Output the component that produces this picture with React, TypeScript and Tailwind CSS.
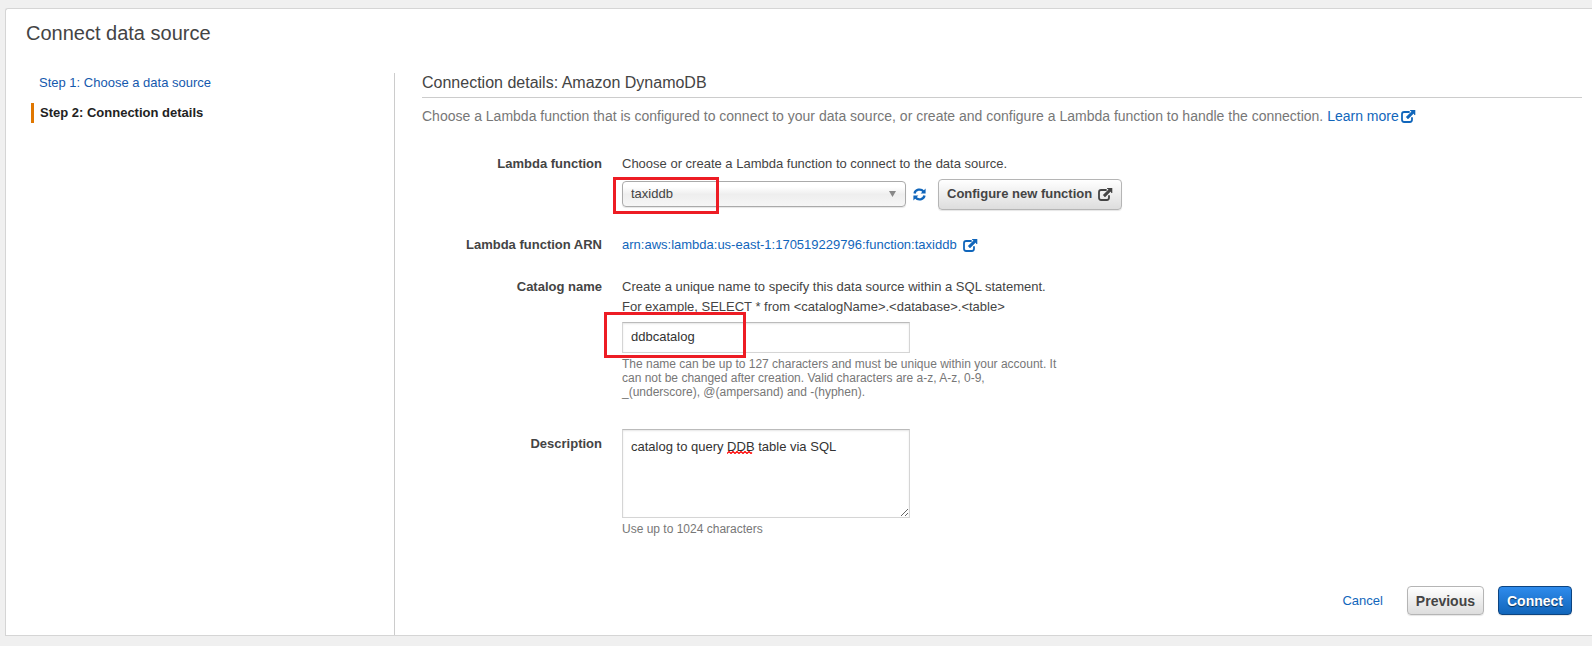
import type { ReactNode } from "react";

function ExternalIcon({ className = "" }: { className?: string }) {
  return (
    <svg viewBox="0 0 15 13" className={`inline-block h-[13px] w-[15px] ${className}`} aria-hidden="true">
      <path d="M8 2H3.200Q1 2 1 4.200V9.800Q1 12 3.200 12H8.800Q11 12 11 9.800V8" fill="none" stroke="currentColor" strokeWidth="1.800" strokeLinecap="round" />
      <path d="M9 0H14V5L12.400 3.500L7 8.900L5.200 7.100L10.600 1.700Z" fill="currentColor" stroke="currentColor" strokeWidth="0.600" strokeLinejoin="round" />
    </svg>
  );
}

function RefreshIcon() {
  return (
    <svg viewBox="0 0 13 13" className="h-[13px] w-[13px]" aria-hidden="true">
      <g fill="none" stroke="currentColor" strokeWidth="2.300">
        <path d="M1.500 5.500A5 4.600 0 0 1 10.500 3.500" />
        <path d="M11.500 7.500A5 4.600 0 0 1 2.500 9.500" />
      </g>
      <path d="M12.600 0.600V5.600H7.600ZM0.400 12.400V7.400H5.400Z" fill="currentColor" />
    </svg>
  );
}

function Row({ label, htmlFor, className, children }: { label: string; htmlFor?: string; className: string; children: ReactNode }) {
  return (
    <div className={`grid grid-cols-[180px_1fr] gap-5 ${className}`}>
      {htmlFor ? (
        <label htmlFor={htmlFor} className="text-right font-bold">{label}</label>
      ) : (
        <span className="text-right font-bold">{label}</span>
      )}
      <div>{children}</div>
    </div>
  );
}

export default function App() {
  return (
    <div className="flex min-h-screen flex-col bg-[#f0f0f0] pt-2 pb-[10px] pl-[5px] font-['Liberation_Sans',Arial,sans-serif] text-[13px] leading-5 text-[#444]">
      <div className="flex grow flex-col rounded-tl-[3px] border-y border-l border-[#d5d5d5] bg-white">
        <h1 className="px-5 pt-3 pb-7 text-[20px] leading-6">Connect data source</h1>
        <div className="flex grow">
          <nav className="w-[389px] shrink-0 border-r border-[#ccc] pl-[25px]">
            <ol>
              <li className="pl-2">
                <a href="#step-1" className="text-[#1559ad]">Step 1: Choose a data source</a>
              </li>
              <li className="mt-[10px] border-l-[3px] border-[#e07700] pl-[6px] font-bold text-[#222]" aria-current="step">
                Step 2: Connection details
              </li>
            </ol>
          </nav>
          <main className="flex grow flex-col pr-[10px] pl-[27px]">
            <h2 className="border-b border-[#ccc] pb-1 text-[16px] leading-5">Connection details: Amazon DynamoDB</h2>
            <p className="mt-2 text-[14px] text-[#777]">
              Choose a Lambda function that is configured to connect to your data source, or create and configure a Lambda function to handle the connection.{" "}
              <a href="#learn-more" className="text-[#1166bb]">
                Learn more
                <ExternalIcon className="ml-[2px] align-[-2px]" />
              </a>
            </p>

            <Row label="Lambda function" htmlFor="lambda" className="mt-7">
              <p>Choose or create a Lambda function to connect to the data source.</p>
              <div className="mt-1 flex h-8 items-center">
                <div className="relative w-[284px]">
                  <select
                    id="lambda"
                    className="block h-[26px] w-full appearance-none rounded-[4px] border border-[#aaa] bg-linear-to-b from-white from-20% via-[#eee] via-52% to-[#f6f6f6] px-2 text-[13px] text-[#444] shadow-[0_1px_1px_rgba(0,0,0,0.1)]"
                  >
                    <option>taxiddb</option>
                  </select>
                  <svg viewBox="0 0 7 6" className="pointer-events-none absolute top-[10px] right-[10px] h-[6px] w-[7px] fill-[#888]" aria-hidden="true">
                    <path d="M0 0h7L3.500 6z" />
                  </svg>
                  <div className="pointer-events-none absolute -top-1 -left-[9px] h-[37px] w-[106px] border-3 border-[#ed1c24]" />
                </div>
                <button type="button" aria-label="Refresh functions" className="ml-[7px] text-[#1166bb]">
                  <RefreshIcon />
                </button>
                <button
                  type="button"
                  className="ml-3 flex h-[31px] items-center gap-[6px] rounded-[4px] border border-[#b5b5b5] bg-linear-to-b from-white to-[#ddd] px-2 text-[13px] font-bold text-[#444] shadow-[0_1px_1px_rgba(0,0,0,0.1)]"
                >
                  Configure new function
                  <ExternalIcon />
                </button>
              </div>
            </Row>

            <Row label="Lambda function ARN" className="mt-[25px]">
              <a href="#function" className="text-[#1166bb]">
                arn:aws:lambda:us-east-1:170519229796:function:taxiddb
                <ExternalIcon className="ml-[6px] align-[-3px]" />
              </a>
            </Row>

            <Row label="Catalog name" htmlFor="catalog" className="mt-[22px]">
              <p>Create a unique name to specify this data source within a SQL statement.</p>
              <p>For example, SELECT * from &lt;catalogName&gt;.&lt;database&gt;.&lt;table&gt;</p>
              <div className="relative mt-[5px] w-[288px]">
                <input
                  id="catalog"
                  type="text"
                  defaultValue="ddbcatalog"
                  className="block h-[31px] w-full border border-[#d5d5d5] border-t-[#bbb] px-2 pb-[2px] text-[13px] text-[#333] shadow-[inset_0_1px_2px_rgba(0,0,0,0.1)]"
                />
                <div className="pointer-events-none absolute -top-[10px] -left-[18px] h-[46px] w-[142px] border-3 border-[#ed1c24]" />
              </div>
              <p className="mt-1 w-[440px] text-[12px] leading-[14px] text-[#777]">
                The name can be up to 127 characters and must be unique within your account. It can not be changed after creation. Valid characters are a-z, A-z, 0-9, _(underscore), @(ampersand) and -(hyphen).
              </p>
            </Row>

            <div className="mt-[30px] grid grid-cols-[180px_1fr] gap-5">
              <label htmlFor="description" className="pt-[5px] text-right font-bold">Description</label>
              <div>
                <div className="relative w-[288px]">
                  <textarea
                    id="description"
                    spellCheck={false}
                    defaultValue="catalog to query DDB table via SQL"
                    className="block h-[89px] w-full border border-[#d5d5d5] border-t-[#bbb] px-2 py-[7px] text-[13px] leading-5 text-[#333] shadow-[inset_0_1px_2px_rgba(0,0,0,0.1)]"
                  />
                  <svg viewBox="0 0 27 3" className="pointer-events-none absolute top-[22px] left-[105px] h-[3px] w-[27px]" fill="none" stroke="#f00" strokeWidth="1.200" aria-hidden="true">
                    <path d="M0 2.500l2-2 2 2 2-2 2 2 2-2 2 2 2-2 2 2 2-2 2 2 2-2 2 2 1-1" />
                  </svg>
                </div>
                <p className="mt-1 text-[12px] leading-[14px] text-[#777]">Use up to 1024 characters</p>
              </div>
            </div>

            <div className="mt-auto flex items-center justify-end pt-10 pr-[10px] pb-5">
              <a href="#cancel" className="mr-6 text-[#1166bb]">Cancel</a>
              <button
                type="button"
                className="mr-[14px] h-[29px] rounded-[4px] border border-[#b5b5b5] bg-linear-to-b from-white to-[#ddd] px-2 text-[14px] font-bold text-[#444] shadow-[0_1px_1px_rgba(0,0,0,0.1)]"
              >
                Previous
              </button>
              <button
                type="button"
                className="h-[29px] rounded-[4px] border border-[#0d4480] bg-linear-to-b from-[#2e8bec] to-[#1166bb] px-2 text-[14px] font-bold text-white shadow-[0_1px_1px_rgba(0,0,0,0.1)] text-shadow-[0_1px_1px_rgba(0,0,0,0.6)]"
              >
                Connect
              </button>
            </div>
          </main>
        </div>
      </div>
    </div>
  );
}
